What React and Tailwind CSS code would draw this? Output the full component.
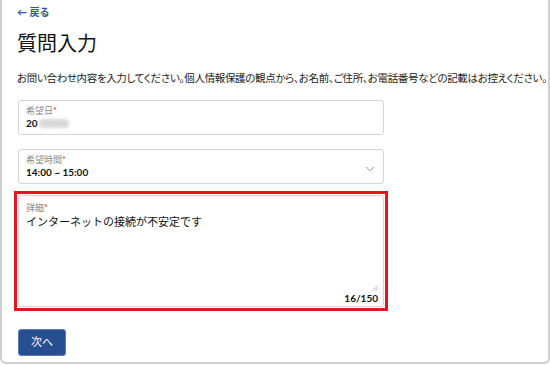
import { ChevronDown } from "lucide-react";

function App() {
  return (
    <div className="h-[365px] w-[550px] bg-white font-['Lato','Noto_Sans_CJK_JP',sans-serif] text-[#222]">
      <div className="h-[364px] border-2 border-t-0 border-[#cfcfcf] rounded-b-[6px] pl-[15px] pr-2">
        <a href="#" className="flex items-center pt-[5px] text-[10px] font-bold text-[#2b57a0] leading-[14px]">
          ← 戻る
        </a>

        <h1 className="mt-[13px] text-[20px] leading-[22px] text-[#111]">質問入力</h1>

        <p className="mt-[17px] text-[10.5px] leading-[14px] whitespace-nowrap text-[#222] [font-feature-settings:'palt'] tracking-[-0.35px]">
          お問い合わせ内容を入力してください。個人情報保護の観点から、お名前、ご住所、お電話番号などの記載はお控えください。
        </p>

        <div className="mt-[15px] ml-[1px] w-[366px] flex flex-col gap-[14px]">
          <div className="h-[35px] border border-[#d4d4d4] rounded-[3px] px-[7px] pt-[4px]">
            <div className="text-[9px] leading-[12px] text-[#888]">
              希望日<span className="text-[#d0192a]">*</span>
            </div>
            <div className="flex items-center text-[10px] font-bold leading-[13px] text-[#111]">
              20
              <span className="ml-[1px] h-[9px] w-[30px] rounded-sm bg-[#d8d8d8] blur-[1.5px]"></span>
            </div>
          </div>

          <div className="h-[35px] border border-[#d4d4d4] rounded-[3px] px-[7px] pt-[4px] flex items-center justify-between">
            <div className="self-start">
              <div className="text-[9px] leading-[12px] text-[#888]">
                希望時間<span className="text-[#d0192a]">*</span>
              </div>
              <div className="text-[10px] font-bold leading-[13px] text-[#111]">14:00 ~ 15:00</div>
            </div>
            <ChevronDown size={14} strokeWidth={1.5} className="text-[#8a8a8a] mr-[-1px]" />
          </div>
        </div>

        <div className="mt-[7px] ml-[-3px] w-[374px] h-[120px] border-[3px] border-[#e8131f] p-px">
          <div className="relative h-full border border-[#d4d4d4] rounded-[3px] px-[7px] pt-[6px]">
            <div className="text-[9px] leading-[12px] text-[#888]">
              詳細<span className="text-[#d0192a]">*</span>
            </div>
            <div className="mt-[1px] text-[11px] leading-[14px] text-[#111]">インターネットの接続が不安定です</div>
            <svg className="absolute right-[5px] bottom-[15px]" width="6" height="6" viewBox="0 0 6 6">
              <path d="M1 5.5 L5.5 1 M3.5 5.5 L5.5 3.5" stroke="#999" strokeWidth="0.8" />
            </svg>
            <div className="absolute right-[5px] bottom-[2px] text-[10px] font-bold leading-[12px] text-[#111]">16/150</div>
          </div>
        </div>

        <button className="mt-[18px] ml-[1px] h-[27px] w-[48px] rounded-[3px] border border-[#5a7cb8] bg-[#284e92] text-[11px] text-white">
          次へ
        </button>
      </div>
    </div>
  );
}

export default App;
